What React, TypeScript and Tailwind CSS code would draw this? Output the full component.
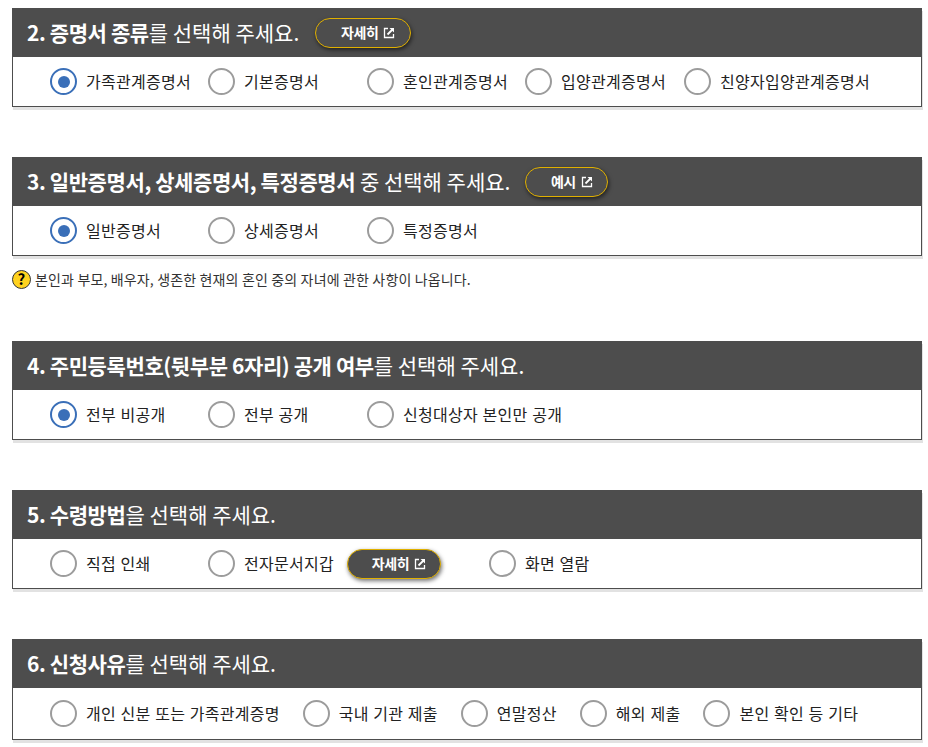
const FONT = "font-['Noto_Sans_CJK_KR','Noto_Sans',sans-serif]";

function LinkIcon() {
  return (
    <svg viewBox="0 0 12 12" className="w-[12px] h-[12px] ml-[5px]" fill="none" stroke="currentColor">
      <path d="M5 1.5H1.5v9h9V7" strokeWidth="1.3" />
      <path d="M4.5 7.5 10 2" strokeWidth="1.8" />
      <path d="M6.5 1h4.5v4.5z" fill="currentColor" stroke="none" />
    </svg>
  );
}

function DetailButton({ label, width }: { label: string; width: string }) {
  return (
    <button
      className={`${width} h-[30px] pl-[10px] rounded-full border border-[#e0b000] bg-[#4d4d4d] flex items-center justify-center text-white text-[14px] font-bold tracking-[-0.4px] shadow-[1px_2px_4px_rgba(0,0,0,0.55)]`}
    >
      {label}
      <LinkIcon />
    </button>
  );
}

function Radio({ label, checked, className }: { label: string; checked?: boolean; className?: string }) {
  return (
    <label className={`flex items-center shrink-0 ${className ?? ''}`}>
      <span
        className={`w-[27px] h-[27px] rounded-full border-2 bg-white flex items-center justify-center shrink-0 ${
          checked ? 'border-[#3a6fb8]' : 'border-[#9c9c9c]'
        }`}
      >
        {checked && <span className="w-[12px] h-[12px] rounded-full bg-[#3a6fb8]" />}
      </span>
      <span className="ml-[9px] mb-[2px] text-[16px] text-[#222] tracking-[0.28px] [word-spacing:0.7px] whitespace-nowrap">{label}</span>
    </label>
  );
}

function Section({ title, rest, button, children, className, bodyClass }: {
  title: string;
  rest: string;
  button?: React.ReactNode;
  children: React.ReactNode;
  className?: string;
  bodyClass?: string;
}) {
  return (
    <section className={`border border-[#4d4d4d] border-t-0 shadow-[1px_3px_0_#e2e2e2] ${className ?? ''}`}>
      <div className="h-[49px] -mx-px bg-[#4d4d4d] flex items-center pl-[15px] text-white text-[21px]">
        <h2 className="whitespace-nowrap">
          <strong className="font-bold tracking-[-0.4px]">{title}</strong>
          {rest}
        </h2>
        {button}
      </div>
      <div className={`${bodyClass ?? 'h-[49px]'} flex items-center pl-[37px]`}>{children}</div>
    </section>
  );
}

export default function App() {
  return (
    <div className={`${FONT} bg-white w-[928px] h-[747px] overflow-hidden pt-[8px] pl-[12px] pr-[6px]`}>
      <Section
        title="2. 증명서 종류"
        rest="를 선택해 주세요."
        button={<div className="ml-[16px]"><DetailButton label="자세히" width="w-[96px]" /></div>}
      >
        <Radio label="가족관계증명서" checked className="w-[158px]" />
        <Radio label="기본증명서" className="w-[159px]" />
        <Radio label="혼인관계증명서" className="w-[158px]" />
        <Radio label="입양관계증명서" className="w-[159px]" />
        <Radio label="친양자입양관계증명서" />
      </Section>

      <Section
        className="mt-[50px]"
        title="3. 일반증명서, 상세증명서, 특정증명서"
        rest=" 중 선택해 주세요."
        button={<div className="ml-[15px]"><DetailButton label="예시" width="w-[83px]" /></div>}
      >
        <Radio label="일반증명서" checked className="w-[158px]" />
        <Radio label="상세증명서" className="w-[159px]" />
        <Radio label="특정증명서" className="w-[158px]" />
      </Section>

      <p className="mt-[13px] flex items-center text-[14px] text-[#333] tracking-[0.15px] h-[20px] whitespace-nowrap">
        <span className="w-[19px] h-[19px] mr-[4px] rounded-full bg-[#ffd21f] border border-[#333] flex items-center justify-center text-[15px] font-bold text-black">?</span>
        본인과 부모, 배우자, 생존한 현재의 혼인 중의 자녀에 관한 사항이 나옵니다.
      </p>

      <Section className="mt-[52px]" title="4. 주민등록번호(뒷부분 6자리) 공개 여부" rest="를 선택해 주세요.">
        <Radio label="전부 비공개" checked className="w-[158px]" />
        <Radio label="전부 공개" className="w-[159px]" />
        <Radio label="신청대상자 본인만 공개" />
      </Section>

      <Section className="mt-[50px]" title="5. 수령방법" rest="을 선택해 주세요.">
        <Radio label="직접 인쇄" className="w-[158px]" />
        <Radio label="전자문서지갑" />
        <div className="ml-[13px] mr-[48px]"><DetailButton label="자세히" width="w-[94px]" /></div>
        <Radio label="화면 열람" />
      </Section>

      <Section className="mt-[50px]" bodyClass="h-[51px]" title="6. 신청사유" rest="를 선택해 주세요.">
        <div className="flex items-center gap-[23px]">
          <Radio label="개인 신분 또는 가족관계증명" />
          <Radio label="국내 기관 제출" />
          <Radio label="연말정산" />
          <Radio label="해외 제출" />
          <Radio label="본인 확인 등 기타" />
        </div>
      </Section>
    </div>
  );
}
